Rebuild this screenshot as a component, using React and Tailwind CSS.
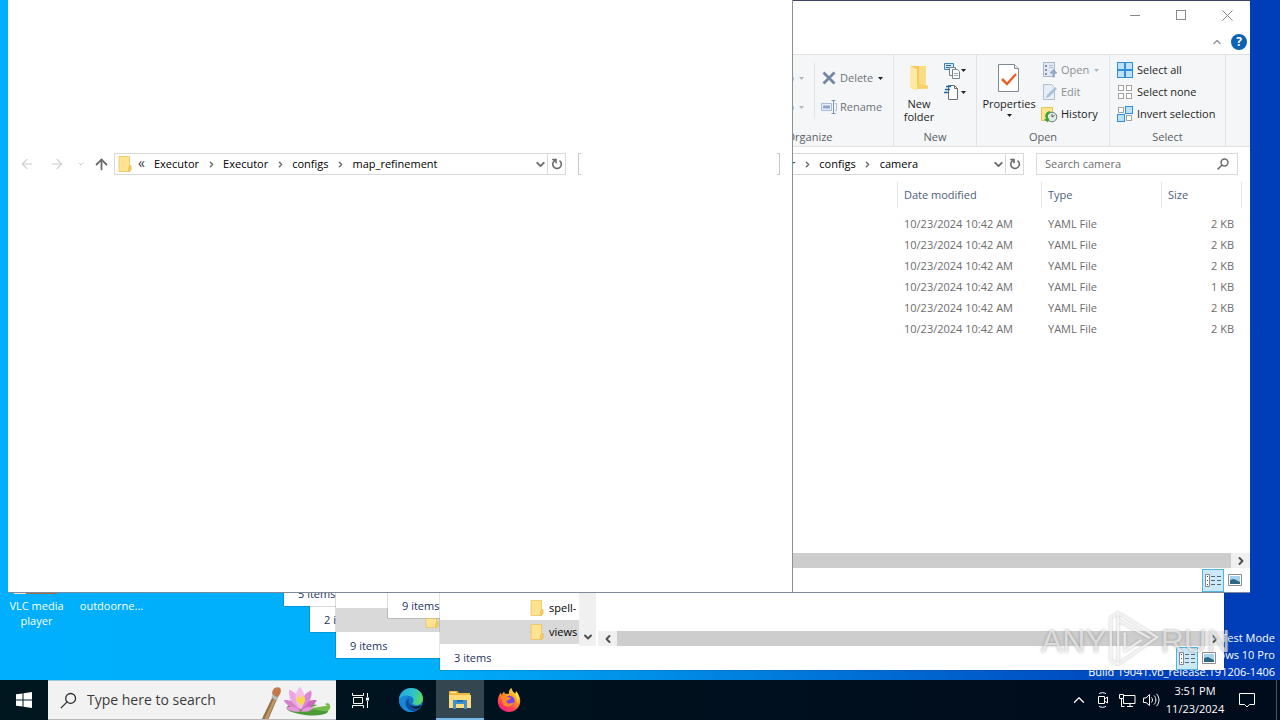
import { ChevronDown, ChevronRight, ChevronUp, ArrowLeft, ArrowRight, ArrowUp } from 'lucide-react';

const files = [
  { id: 1, date: '10/23/2024 10:42 AM', type: 'YAML File', size: '2 KB' },
  { id: 2, date: '10/23/2024 10:42 AM', type: 'YAML File', size: '2 KB' },
  { id: 3, date: '10/23/2024 10:42 AM', type: 'YAML File', size: '2 KB' },
  { id: 4, date: '10/23/2024 10:42 AM', type: 'YAML File', size: '1 KB' },
  { id: 5, date: '10/23/2024 10:42 AM', type: 'YAML File', size: '2 KB' },
  { id: 6, date: '10/23/2024 10:42 AM', type: 'YAML File', size: '2 KB' },
];

// ---------- Icons ----------

function FolderIcon({ className = 'h-4 w-[14px]' }) {
  return (
    <svg viewBox="0 0 14 16" className={className} preserveAspectRatio="none">
      <path d="M1 .5h10.500v15H1z" fill="#ffe391" stroke="#edc45c" strokeWidth=".8" />
      <path d="M10.500 11.500l2.500-2v4.500l-2 1.600z" fill="#ffd562" stroke="#e5b84d" strokeWidth=".8" />
    </svg>
  );
}

function BigFolderIcon() {
  return (
    <svg viewBox="0 0 24 30" className="h-[30px] w-6">
      <path d="M3 3h15v22H3z" fill="#f6c95c" />
      <path d="M12 3h7v19l2 1v3h-9z" fill="#fbdc86" />
      <path d="M3 3l7 3v22l-7-3z" fill="#ffe9a8" />
      <path d="M10 20l11 3v2l-11 1z" fill="#f9d06b" />
    </svg>
  );
}

function RefreshIcon() {
  return (
    <svg viewBox="0 0 12 12" className="h-3 w-3" fill="none" stroke="#6b6b6b" strokeWidth="1.600">
      <path d="M8.500 2.600A4.300 4.300 0 1 1 2.600 3.600L4.500 1.800" />
      <path d="M1.200 1.500H5v3.800" />
    </svg>
  );
}

function SearchIcon({ className }) {
  return (
    <svg viewBox="0 0 16 16" className={className} fill="none" stroke="currentColor">
      <circle cx="10" cy="6" r="4.600" />
      <path d="M6.700 9.300L.8 15.200" />
    </svg>
  );
}

function PropertiesIcon() {
  return (
    <svg viewBox="0 0 24 30" className="h-[30px] w-6">
      <path d="M1.500 1.500h16l4 4v23h-20z" fill="#fff" stroke="#7e8a96" />
      <path d="M17.500 1.500v4h4" fill="#e8ebee" stroke="#7e8a96" />
      <path d="M5 16l5 5 9-10" fill="none" stroke="#e4622a" strokeWidth="2.500" />
    </svg>
  );
}

function DeleteIcon() {
  return (
    <svg viewBox="0 0 14 14" className="h-[14px] w-[14px]">
      <path d="M1.500 1.500l11 11M12.500 1.500l-11 11" stroke="#7386a3" strokeWidth="2.800" />
    </svg>
  );
}

function RenameIcon() {
  return (
    <svg viewBox="0 0 16 16" className="h-4 w-4" fill="none">
      <path d="M.5 4.500h10v7H.5z" fill="#e6edf7" stroke="#a9bbd6" />
      <path d="M2 6.500h7v3H2z" fill="#8ba7d0" />
      <path d="M12.500 2v12M10.500 1.500h4M10.500 14.500h4" stroke="#7d93b5" />
      <path d="M14 4.500h1.500v7H14" stroke="#a9bbd6" />
    </svg>
  );
}

function NewItemIcon() {
  return (
    <svg viewBox="0 0 17 17" className="h-[17px] w-[17px]" fill="none">
      <path d="M.5 1.500h9v6h-9z" fill="#cfe6f5" stroke="#3e86b8" />
      <path d="M2 3.500h5M2 5.500h3" stroke="#2c6a98" />
      <path d="M5.500 5.500h6v8h-6z" fill="#fff" stroke="#75818d" />
      <path d="M8.500 7.500h5l2 2v7h-7z" fill="#fff" stroke="#75818d" />
      <path d="M10 11.500h4M10 13.500h4" stroke="#9aa4ae" />
    </svg>
  );
}

function EasyAccessIcon() {
  return (
    <svg viewBox="0 0 17 17" className="h-[17px] w-[17px]" fill="none">
      <path d="M4.500 1.500h6l3 3v11h-9z" fill="#fff" stroke="#66717c" />
      <path d="M10.500 1.500v3h3" stroke="#66717c" />
      <path d="M2 2.500h5M1 5.500h5M0 8.500h4" stroke="#1f64a8" strokeWidth="1.500" />
    </svg>
  );
}

function OpenIcon() {
  return (
    <svg viewBox="0 0 16 16" className="h-4 w-4" fill="none">
      <path d="M1.500.5h11v14h-11z" fill="#e4eaf4" stroke="#a9b6ca" />
      <path d="M3 3h2v2H3zM3 7h2v2H3zM3 11h2v2H3z" fill="#7f90ad" />
      <path d="M7 3.500h4M7 5.500h4" stroke="#b2bfd4" />
      <path d="M11.500 15.500v-6M8.500 11.500l3-3 3 3" stroke="#94a7c6" strokeWidth="2" />
    </svg>
  );
}

function EditIcon() {
  return (
    <svg viewBox="0 0 16 16" className="h-4 w-4" fill="none">
      <path d="M1.500.5h8l3 3v12h-11z" fill="#e6eef8" stroke="#b1bfd2" />
      <path d="M4 14l1-3 8-8 2 2-8 8z" fill="#aebfd9" />
    </svg>
  );
}

function HistoryIcon() {
  return (
    <svg viewBox="0 0 17 17" className="h-[17px] w-[17px]" fill="none">
      <path d="M.5 1.500h11v13H.5z" fill="#ffe58d" stroke="#e5c25c" />
      <circle cx="11" cy="11" r="4.800" fill="#e3ebe6" stroke="#6b7b73" />
      <path d="M11 8v3l2.500-1.500" stroke="#4a554f" />
      <path d="M9 5C4 6 3.500 10 5 13l-2 .5 4 3 1.500-4.500-1.500.5C6 9 7 7.500 9.500 7z" fill="#3aa535" />
    </svg>
  );
}

function SelectIcon({ filled }) {
  const cells = [[1, 1], [9, 1], [1, 9], [9, 9]];
  return (
    <svg viewBox="0 0 17 17" className="h-[17px] w-[17px]">
      {cells.map(([x, y], i) => {
        const on = filled.includes(i);
        const inset = on ? 0 : 1;
        return (
          <rect
            key={i}
            x={x - 0.5 + inset}
            y={y - 0.5 + inset}
            width={on ? 7 : 5}
            height={on ? 7 : 5}
            fill={on ? '#bfe2fb' : '#fff'}
            stroke={on ? '#2f8fdc' : '#a8a29c'}
          />
        );
      })}
    </svg>
  );
}

function DropArrow({ faded }) {
  return (
    <svg viewBox="0 0 5 3" className="h-[3px] w-[5px] shrink-0">
      <path d="M0 0h5L2.500 3z" fill={faded ? '#b3b7bb' : '#1e1e1e'} />
    </svg>
  );
}

// ---------- Explorer window ----------

function ExplorerWindow({ className, children }) {
  return (
    <section className={`absolute flex h-[592px] w-[784px] flex-col overflow-hidden bg-white ${className}`}>
      {children}
    </section>
  );
}

function AddressBar({ crumbs, children }) {
  return (
    <div className="mb-px flex h-[34px] shrink-0 items-center pr-3">
      <nav className="flex w-[106px] shrink-0 items-center pl-1">
        <button aria-label="Back" className="flex w-[30px] justify-center text-[#cdcdcd]">
          <ArrowLeft size={16} strokeWidth={1.75} />
        </button>
        <button aria-label="Forward" className="flex w-[30px] justify-center text-[#cdcdcd]">
          <ArrowRight size={16} strokeWidth={1.75} />
        </button>
        <button aria-label="Recent locations" className="flex w-[18px] justify-center text-[#cdcdcd]">
          <ChevronDown size={8} strokeWidth={3} />
        </button>
        <button aria-label="Up" className="flex w-[22px] justify-center text-[#6b6b6b]">
          <ArrowUp size={17} strokeWidth={2.5} />
        </button>
      </nav>
      <div className="mr-3 flex h-[22px] flex-1 items-center border border-[#d9d9d9] pl-[3px]">
        <FolderIcon />
        <span className="w-[22px] pb-[2px] pl-[6px] text-sm leading-4 text-[#404040]">«</span>
        <ol className="flex flex-1 items-center">
          {crumbs.map((crumb, i) => (
            <li key={i} className="flex items-center">
              {i > 0 && (
                <span className="flex w-6 justify-center text-[#6b6b6b]">
                  <ChevronRight size={9} strokeWidth={4} />
                </span>
              )}
              {crumb}
            </li>
          ))}
        </ol>
        <button aria-label="Previous locations" className="flex w-[14px] justify-center text-[#6b6b6b]">
          <ChevronDown size={13} strokeWidth={3.5} />
        </button>
        <button aria-label="Refresh" className="flex h-full w-[18px] items-center justify-center border-l border-[#d9d9d9]">
          <RefreshIcon />
        </button>
      </div>
      {children}
    </div>
  );
}

function ViewButtons() {
  return (
    <div className="flex items-center gap-1 pr-2">
      <button aria-label="Details view" className="flex h-[23px] w-[22px] items-center justify-center border border-[#4fb3e3] bg-[#cbe9fb]">
        <svg viewBox="0 0 17 13" className="h-[13px] w-[17px]" fill="none">
          <path d="M.5.500h4v12h-4z" fill="#fff" stroke="#85898c" />
          <path d="M2 2.500h1M2 6.500h1M2 10.500h1" stroke="#444" />
          <path d="M6 2.500h4M12 2.500h4M6 6.500h4M12 6.500h4M6 10.500h4M12 10.500h4" stroke="#5d676e" />
        </svg>
      </button>
      <button aria-label="Large icons view" className="flex w-[14px] justify-center">
        <svg viewBox="0 0 14 12" className="h-3 w-[14px]">
          <path d="M.5.500h13v11H.5z" fill="#fff" stroke="#8b8f93" />
          <path d="M2 2h10v8H2z" fill="#a5d3ee" />
          <path d="M2 6l4-1 6 3v2H2z" fill="#2f6680" />
        </svg>
      </button>
    </div>
  );
}

function StatusBar({ text, views }) {
  return (
    <footer className="flex h-6 shrink-0 items-center justify-between pl-[14px] text-[#1e3264]">
      <span className="whitespace-nowrap">{text}</span>
      {views && <ViewButtons />}
    </footer>
  );
}

function HorizontalScroll({ arrowLeft }) {
  return (
    <div className="flex h-[15px] shrink-0 items-center bg-[#f0f0f0] text-[#505050]">
      {arrowLeft && (
        <span className="flex w-[19px] justify-center">
          <ChevronRight size={12} strokeWidth={4} className="rotate-180" />
        </span>
      )}
      <div className="h-full flex-1 bg-[#cdcdcd]" />
      <span className="flex w-[19px] justify-center">
        <ChevronRight size={12} strokeWidth={4} />
      </span>
    </div>
  );
}

function RibbonGroup({ title, className, children }) {
  return (
    <div className={`flex flex-col border-r border-[#e1e2e3] ${className}`}>
      <div className="flex h-[74px]">{children}</div>
      <div className="text-center leading-4 text-[#5a5f66]">{title}</div>
    </div>
  );
}

function RibbonButton({ icon, label, arrow, disabled }) {
  return (
    <button disabled={disabled} className={`flex h-[22px] items-center gap-[3px] whitespace-nowrap ${disabled ? 'text-[#8a8f94]' : 'text-[#1e1e1e]'}`}>
      <span className="flex w-[17px] justify-center">{icon}</span>
      {label}
      {arrow && <span className="pl-[2px]"><DropArrow faded={disabled} /></span>}
    </button>
  );
}

function Ribbon() {
  return (
    <div className="flex h-[93px] shrink-0 justify-end border-y border-[#dfe0e1] bg-[#f5f6f7] pr-6">
      <RibbonGroup title="Organize" className="w-[168px]">
        <div className="mt-2 flex h-14 w-[89px] flex-col items-end gap-[7px] border-r border-[#e1e2e3] pt-1 pr-[10px]">
          <RibbonButton label="Move to" arrow disabled />
          <RibbonButton label="Copy to" arrow disabled />
        </div>
        <div className="flex flex-col gap-[7px] pt-3 pl-[5px] text-[#6d7278]">
          <button className="flex h-[22px] items-center gap-[3px]">
            <span className="flex w-[17px] justify-center"><DeleteIcon /></span>
            Delete
            <span className="pl-[2px]"><DropArrow /></span>
          </button>
          <button className="flex h-[22px] items-center gap-[3px]">
            <span className="flex w-[17px] justify-center"><RenameIcon /></span>
            Rename
          </button>
        </div>
      </RibbonGroup>
      <RibbonGroup title="New" className="w-[83px]">
        <button className="flex w-[50px] flex-col items-center pt-2 leading-[13px] text-[#1e1e1e]">
          <BigFolderIcon />
          <span className="pt-1">New<br />folder</span>
        </button>
        <div className="flex flex-col pt-1">
          <button aria-label="New item" className="flex h-[22px] items-center"><NewItemIcon /><DropArrow /></button>
          <button aria-label="Easy access" className="flex h-[22px] items-center"><EasyAccessIcon /><DropArrow /></button>
        </div>
      </RibbonGroup>
      <RibbonGroup title="Open" className="w-[133px]">
        <button className="flex w-16 flex-col items-center pt-2 leading-[13px] text-[#1e1e1e]">
          <PropertiesIcon />
          <span className="py-1">Properties</span>
          <DropArrow />
        </button>
        <div className="flex flex-col pt-1">
          <RibbonButton icon={<OpenIcon />} label="Open" arrow disabled />
          <RibbonButton icon={<EditIcon />} label="Edit" disabled />
          <RibbonButton icon={<HistoryIcon />} label="History" />
        </div>
      </RibbonGroup>
      <RibbonGroup title="Select" className="w-[116px]">
        <div className="flex flex-col pt-1 pl-[7px]">
          <RibbonButton icon={<SelectIcon filled={[0, 1, 2, 3]} />} label="Select all" />
          <RibbonButton icon={<SelectIcon filled={[]} />} label="Select none" />
          <RibbonButton icon={<SelectIcon filled={[1, 2]} />} label="Invert selection" />
        </div>
      </RibbonGroup>
    </div>
  );
}

function CameraWindow() {
  return (
    <ExplorerWindow className="left-[466px] top-0 border-t border-[#3c4468] shadow-[0_1px_0_#7d8a99]">
      <div className="flex h-7 shrink-0 justify-end text-[#8a8a8a]">
        <button aria-label="Minimize" className="flex w-[46px] items-center justify-center"><span className="h-px w-[10px] bg-[#8a8a8a]" /></button>
        <button aria-label="Maximize" className="flex w-[46px] items-center justify-center"><span className="h-[10px] w-[10px] border border-[#8a8a8a]" /></button>
        <button aria-label="Close" className="flex w-[46px] items-center justify-center">
          <svg viewBox="0 0 11 11" className="h-[11px] w-[11px]" stroke="#8a8a8a"><path d="M.5.500l10 10M10.500.500l-10 10" /></svg>
        </button>
      </div>
      <div className="flex h-[25px] shrink-0 items-center justify-end gap-2 pr-[3px]">
        <button aria-label="Minimize the ribbon" className="text-[#9a9a9a]"><ChevronUp size={12} strokeWidth={3} /></button>
        <button aria-label="Help" className="h-4 w-4 rounded-full bg-[#0c62b4] text-center text-xs leading-4 font-bold text-white">?</button>
      </div>
      <Ribbon />
      <AddressBar crumbs={['Executor', 'Executor', 'Executor', 'configs', 'camera']}>
        <label className="flex h-[22px] w-[202px] items-center border border-[#d9d9d9] px-2 text-[#6d6d6d]">
          <input type="text" aria-label="Search camera" placeholder="Search camera" className="min-w-0 flex-1 outline-none placeholder:text-[#6d6d6d]" />
          <SearchIcon className="h-3 w-3 stroke-2" />
        </label>
      </AddressBar>
      <div className="flex-1">
        <table className="w-full table-fixed border-collapse text-left">
          <thead className="text-[#4c607a]">
            <tr className="h-[31px] align-top">
              <th className="w-[432px] font-normal"><span className="block h-[26px] border-r border-[#e5e5e5]" /></th>
              <th className="w-36 font-normal"><span className="block h-[26px] border-r border-[#e5e5e5] pl-[6px] leading-[26px]">Date modified</span></th>
              <th className="w-[120px] font-normal"><span className="block h-[26px] border-r border-[#e5e5e5] pl-[6px] leading-[26px]">Type</span></th>
              <th className="w-20 font-normal"><span className="block h-[26px] border-r border-[#e5e5e5] pl-[6px] leading-[26px]">Size</span></th>
              <th />
            </tr>
          </thead>
          <tbody className="text-[#6d6d6d]">
            {files.map((file) => (
              <tr key={file.id} className="h-[21px]">
                <td />
                <td className="pl-[6px]">{file.date}</td>
                <td className="pl-[6px]">{file.type}</td>
                <td className="pr-2 text-right">{file.size}</td>
                <td />
              </tr>
            ))}
          </tbody>
        </table>
      </div>
      <HorizontalScroll />
      <StatusBar views />
    </ExplorerWindow>
  );
}

// Window that is still painting: only the address row is ready.
function MapWindow() {
  return (
    <ExplorerWindow className="left-2 top-0 shadow-[1px_0_0_#8f8f8f,0_1px_0_#7d8a99]">
      <div className="h-[147px] shrink-0" />
      <AddressBar crumbs={['Executor', 'Executor', 'configs', 'map_refinement']}>
        <div className="h-[22px] w-[202px] border border-[#c9c9c9]">
          <input type="text" aria-label="Search map_refinement" className="mx-[2px] -mt-px block h-[22px] w-[196px] bg-white outline-none" />
        </div>
      </AddressBar>
    </ExplorerWindow>
  );
}

function ViewsWindow() {
  return (
    <ExplorerWindow className="left-[440px] top-[78px] shadow-[0_0_1px_rgba(0,0,0,0.6)]">
      <div className="flex flex-1">
        <ul className="flex w-[139px] flex-col justify-end overflow-hidden pb-[2px]">
          <li className="flex h-6 shrink-0 items-center gap-[5px] pl-[90px] whitespace-nowrap"><FolderIcon className="h-4 w-[14px] shrink-0" />spell-</li>
          <li className="flex h-6 shrink-0 items-center gap-[5px] bg-[#d9d9d9] pl-[90px] whitespace-nowrap"><FolderIcon className="h-4 w-[14px] shrink-0" />views</li>
        </ul>
        <div className="flex w-[17px] items-end justify-center bg-[#f0f0f0] pb-[3px] text-[#505050]">
          <ChevronDown size={12} strokeWidth={4} />
        </div>
        <div className="ml-[2px] flex flex-1 flex-col justify-end"><HorizontalScroll arrowLeft /></div>
      </div>
      <StatusBar text="3 items" views />
    </ExplorerWindow>
  );
}

function PlainWindow({ className, text, children }) {
  return (
    <ExplorerWindow className={`shadow-[0_0_1px_rgba(0,0,0,0.8)] ${className}`}>
      <div className="flex flex-1 flex-col justify-end">{children}</div>
      <StatusBar text={text} />
    </ExplorerWindow>
  );
}

// ---------- Taskbar ----------

function LotusArt() {
  return (
    <svg viewBox="0 0 76 38" className="h-9 w-[72px] self-end">
      <path d="M2 38L13 15l5 2L9 38z" fill="#96714a" />
      <path d="M5 38L15 16l2 1L8 38z" fill="#c19a6b" />
      <path d="M12 15l2-4 6 2-2 6z" fill="#b9bdc0" />
      <path d="M13 12c-1-6 4-9 8-7 3 4-1 9-3 10z" fill="#c5794b" />
      <ellipse cx="50" cy="28" rx="22" ry="6" fill="#4c9a37" transform="rotate(5 50 28)" />
      <path d="M50 27l22-6c4 3 2 8-2 9z" fill="#74bb4c" />
      <path d="M50 27l21-3-4-3z" fill="#f2f2f2" />
      <path d="M43 28c-9 0-16-5-18-10 7-1 13 2 18 10z" fill="#d980cd" />
      <path d="M43 28c9 0 14-4 17-10-8-1-13 2-17 10z" fill="#c969bf" />
      <path d="M43 28C33 22 29 13 31 7c8 3 12 10 12 21z" fill="#eca6e2" />
      <path d="M43 28c9-6 13-14 11-20-8 3-11 10-11 20z" fill="#dd87d4" />
      <path d="M43 28c-7-8-7-18-1-24 6 6 7 16 1 24z" fill="#f5bdea" />
      <path d="M38 18l3-5 2 3 3-3 2 6-5 5z" fill="#f5d84e" />
      <path d="M43 30c-7 1-13-1-16-4 6-2 12-1 16 4zM43 30c7 1 11-1 14-4-6-2-10-1-14 4z" fill="#e695dc" />
    </svg>
  );
}

function EdgeIcon() {
  return (
    <svg viewBox="0 0 24 24" className="h-6 w-6">
      <defs>
        <linearGradient id="edgeTop" x1="0" x2="1" y1=".3" y2=".5">
          <stop offset="0" stopColor="#22a7e8" />
          <stop offset=".6" stopColor="#2fc5c4" />
          <stop offset="1" stopColor="#60d95a" />
        </linearGradient>
      </defs>
      <circle cx="12" cy="12" r="12" fill="#1476c9" />
      <path d="M0 12C0 5 5.500 0 12 0c7 0 12 5 12 10.500 0 4-3 6.500-6.500 6.500-3 0-4.500-1-3.500-2.500 2-3-.5-6.500-4-6.500C6 7 2 8 0 12z" fill="url(#edgeTop)" />
      <path d="M10 8c-4 2-5 7-2.500 11 2 3 5 4.500 8 4.500C8 26 0 20 0 12c2-4 6-5 10-4z" fill="#1688d8" />
      <path d="M10.500 10c-2 2-1.500 6 1 8 3 2 7 2 10.500.5-2 3.500-6 5.500-10 4-6-2-7-10-1.500-12.500z" fill="#0c4c99" />
      <path d="M10.500 11c-1.500 3 0 7 5 7.500 3 .3 5-.5 7-1.500-1 1.500-1.500 2-2.500 3-3 1-7 0-9-3-1.500-2-1.500-4.500-.5-6z" fill="#001620" />
    </svg>
  );
}

function ExplorerIcon() {
  return (
    <svg viewBox="0 0 22 19" className="h-[19px] w-[22px]">
      <path d="M0 1h8l2 2h11v15H0z" fill="#eeb63d" />
      <path d="M2 2.500h5" stroke="#fff0b5" />
      <path d="M0 5h22v13H0z" fill="#ffdc7b" />
      <path d="M4 10h14v9h-3v-5H7v5H4z" fill="#3e92cf" />
      <path d="M8 10h6v2H8z" fill="#246ea7" />
    </svg>
  );
}

function FirefoxIcon() {
  return (
    <svg viewBox="0 0 24 24" className="h-6 w-6">
      <defs>
        <linearGradient id="fox" x1=".8" x2=".2" y1="0" y2="1">
          <stop offset="0" stopColor="#ffe944" />
          <stop offset=".4" stopColor="#ff9622" />
          <stop offset=".7" stopColor="#ff4650" />
          <stop offset="1" stopColor="#e3198d" />
        </linearGradient>
      </defs>
      <path d="M12 24C5 24 .5 19 .8 12.500 1 9 2.500 6 4 4.500L4.500 7 7 3.500 8 6c1.500-.5 3-.5 4 0-.5-3 1-5 2.500-6 .5 3 2 4 4 6l.5-2c3 3 4.500 6 4.200 9.500C22.800 19.500 18 24 12 24z" fill="url(#fox)" />
      <circle cx="12.500" cy="13" r="5.300" fill="#7a43e5" />
      <path d="M4 9c3-2 5-1 7 0l3 1c-1 2-3 2-4 2.500-1 1 0 3 2.500 3 2 0 3-1 4.500-.5C15 19 9 20 6 16z" fill="#ff8a25" />
      <path d="M15 3c4 4 6 7 5 12 3-4 2-9-1-12l-.5 3z" fill="#ffe14a" />
    </svg>
  );
}

function Taskbar() {
  return (
    <div className="flex h-10 shrink-0 bg-linear-to-r from-[#001720] to-[#000b1c] text-white">
      <button aria-label="Start" className="flex w-12 items-center justify-center">
        <svg viewBox="0 0 16 16" className="h-4 w-4" fill="#fff">
          <path d="M0 2.300L6.500 1.400v6.100H0zM7.500 1.200L16 0v7.500H7.500zM0 8.500h6.500v6.100L0 13.700zM7.500 8.500H16V16l-8.500-1.200z" />
        </svg>
      </button>
      <label className="flex w-72 items-center border-t border-b border-t-[#9ccbd8] border-b-[#b9b9b9] bg-[#f2f2f2] pr-1 pl-3 text-[#2b2b2b]">
        <SearchIcon className="h-[17px] w-[17px] shrink-0 stroke-[1.2]" />
        <input type="text" aria-label="Type here to search" placeholder="Type here to search" className="ml-[10px] min-w-0 flex-1 text-sm outline-none placeholder:text-[#3c3c3c]" />
        <LotusArt />
      </label>
      <button aria-label="Task view" className="flex w-12 items-center justify-center">
        <svg viewBox="0 0 17 17" className="h-[17px] w-[17px]" fill="none" stroke="#fff">
          <path d="M.5 1v2.500h11V1M1.500 5.500h9v6h-9zM.5 16v-2.500h11V16M15.500 1v4M15.500 9v7" />
          <path d="M14 5.500h3v3h-3z" fill="#fff" stroke="none" />
        </svg>
      </button>
      <button aria-label="Edge" className="flex w-[52px] items-center justify-center pl-[2px]"><EdgeIcon /></button>
      <button aria-label="File Explorer" className="flex w-12 items-center justify-center border-b-2 border-[#76b9ed] bg-[#34464f]"><ExplorerIcon /></button>
      <button aria-label="Firefox" className="flex w-[50px] items-center justify-center"><FirefoxIcon /></button>
      <div className="ml-auto flex items-center">
        <button aria-label="Show hidden icons" className="flex w-6 justify-center"><ChevronUp size={18} strokeWidth={1.6} /></button>
        <button aria-label="Meet now" className="flex w-6 justify-center">
          <svg viewBox="0 0 14 16" className="h-4 w-[14px]" fill="none" stroke="#fff">
            <path d="M2.500 4.500h6v7h-6zM8.500 7l3-2v6l-3-2M3 1.800C5 .3 8 .3 10 1.800M3 14.200c2 1.500 5 1.500 7 0" />
          </svg>
        </button>
        <button aria-label="Network" className="flex w-6 justify-center">
          <svg viewBox="0 0 17 15" className="h-[15px] w-[17px]" fill="none" stroke="#fff">
            <path d="M5 2.500h11v8H4.500V6M8 13.500h6M11 10.500v3M.5 1.500h4v4h-4zM2.500 5.500v8h3" />
          </svg>
        </button>
        <button aria-label="Volume" className="flex w-6 justify-center">
          <svg viewBox="0 0 17 14" className="h-[14px] w-[17px]" fill="none" stroke="#fff">
            <path d="M.5 5h2.500l3.500-3.500v11L3 9.500H.5zM8.500 4.500c1.300 1.500 1.300 3.500 0 5M11 2.500c2.500 2.500 2.500 6.500 0 9M13.500.8c3.300 3.700 3.300 8.700 0 12.400" />
          </svg>
        </button>
        <button className="w-16 text-center leading-[18px]">
          <span className="block">3:51 PM</span>
          <span className="block">11/23/2024</span>
        </button>
        <button aria-label="Notifications" className="ml-[5px] flex w-[30px] justify-center">
          <svg viewBox="0 0 16 16" className="h-4 w-4" fill="none" stroke="#fff">
            <path d="M.5 1.500h15v11h-5l-2.500 2.500-2.500-2.500h-5z" />
          </svg>
        </button>
        <span className="ml-[14px] h-10 w-1 border-l border-[#4a5560]" />
      </div>
    </div>
  );
}

// ---------- Desktop ----------

function Watermark() {
  return (
    <div className="pointer-events-none absolute right-[50px] bottom-3 flex items-center font-['Liberation_Sans',sans-serif] text-[32px] leading-10 text-white/60 [text-shadow:0_0_3px_rgba(110,110,110,0.6)]">
      <span className="pt-1">ANY</span>
      <svg viewBox="0 0 58 62" className="h-[58px] w-[54px] drop-shadow-[0_0_1px_rgba(110,110,110,0.6)]" fill="none" stroke="#fff" strokeOpacity=".7" strokeWidth="2.500" strokeLinejoin="round">
        <path d="M12 3l42 26-42 29z" />
        <path d="M12 11l34 19M4 8v46l8 4M4 8l8-5M19 24v20l18-12" />
      </svg>
      <span className="pt-1">RUN</span>
    </div>
  );
}

export default function App() {
  return (
    <div className="flex h-screen flex-col overflow-hidden font-['Open_Sans','Noto_Sans',sans-serif] text-[11px] leading-4 text-black">
      <main className="relative flex-1 overflow-hidden bg-linear-to-r from-[#00affd] via-[#00b0fb] via-33% to-[#003db9] to-92%">
        <div className="absolute top-[546px] left-0 flex w-[73px] flex-col items-center gap-1 text-center leading-[15px] text-white">
          <svg viewBox="0 0 48 48" className="h-12 w-12">
            <path d="M24 2l12 36H12z" fill="#f08a24" />
            <path d="M1 40h12v8H1z" fill="#f3e7dc" />
            <path d="M13 40h31v8H13z" fill="#a36c3f" />
          </svg>
          VLC media player
        </div>
        <div className="absolute top-[598px] left-[75px] w-[73px] text-center leading-[15px] text-white">outdoorne...</div>
        <div className="absolute right-[5px] bottom-0 text-right leading-[17px] text-white">
          <p>Test Mode</p>
          <p>Windows 10 Pro</p>
          <p>Build 19041.vb_release.191206-1406</p>
        </div>

        <PlainWindow className="left-[310px] top-10" text="2 items" />
        <PlainWindow className="left-[284px] top-[14px]" text="5 items" />
        <PlainWindow className="left-[336px] top-[66px]" text="9 items">
          <div className="mb-[2px] flex h-6 items-center bg-[#d9d9d9] pl-[89px]"><FolderIcon /></div>
        </PlainWindow>
        <PlainWindow className="left-[388px] top-[26px]" text="9 items" />
        <ViewsWindow />
        <CameraWindow />
        <MapWindow />
        <Watermark />
      </main>
      <Taskbar />
    </div>
  );
}
